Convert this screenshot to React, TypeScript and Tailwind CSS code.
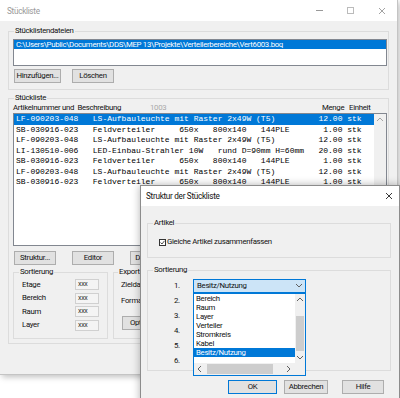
import React from 'react';

const rows: [string, string, string, string][] = [
  ['LF-090203-048', 'LS-Aufbauleuchte mit Raster 2x49W (T5)', '12.00', 'stk'],
  ['SB-030916-023', 'Feldverteiler     650x   800x140   144PLE', '1.00', 'stk'],
  ['LF-090203-048', 'LS-Aufbauleuchte mit Raster 2x49W (T5)', '12.00', 'stk'],
  ['LI-130510-006', 'LED-Einbau-Strahler 10W   rund D=90mm H=60mm', '20.00', 'stk'],
  ['SB-030916-023', 'Feldverteiler     650x   800x140   144PLE', '1.00', 'stk'],
  ['LF-090203-048', 'LS-Aufbauleuchte mit Raster 2x49W (T5)', '12.00', 'stk'],
  ['SB-030916-023', 'Feldverteiler     650x   800x140   144PLE', '1.00', 'stk'],
];

const line = (r: [string, string, string, string]) =>
  r[0].padEnd(16) + r[1].padEnd(47) + r[2].padStart(5) + ' ' + r[3];

const Btn = ({ children, w, def }: { children: React.ReactNode; w: string; def?: boolean }) => (
  <div
    className={`${w} h-[14px] flex items-center justify-center bg-[#e1e1e1] border ${
      def ? 'border-[#0078d7]' : 'border-[#adadad]'
    } leading-[10px] whitespace-nowrap overflow-hidden`}
  >
    {children}
  </div>
);

const Chevron = ({ dir, color = '#606060' }: { dir: 'up' | 'down' | 'left' | 'right'; color?: string }) => {
  const pts = {
    up: '1,5 4,2 7,5',
    down: '1,2 4,5 7,2',
    left: '5,1 2,4 5,7',
    right: '2,1 5,4 2,7',
  }[dir];
  return (
    <svg width="8" height="8" viewBox="0 0 8 8">
      <polyline points={pts} fill="none" stroke={color} strokeWidth="1" />
    </svg>
  );
};

const Xmark = ({ color }: { color: string }) => (
  <svg width="8" height="8" viewBox="0 0 8 8">
    <path d="M1 1 L7 7 M7 1 L1 7" stroke={color} strokeWidth="0.9" />
  </svg>
);

const sortFields = ['Etage', 'Bereich', 'Raum', 'Layer'];
const listItems = ['Bereich', 'Raum', 'Layer', 'Verteiler', 'Stromkreis', 'Kabel', 'Besitz/Nutzung'];

export default function App() {
  return (
    <div className="relative w-[400px] h-[398px] bg-white overflow-hidden font-['Roboto',sans-serif] text-[7.8px] tracking-[-0.3px] leading-[10px] text-[#111]">
      {/* Hauptfenster */}
      <div className="absolute left-0 top-0 w-[398px] h-[375px] bg-[#f0f0f0] border-r border-b border-[#c4c4c4] shadow-[2px_2px_6px_rgba(0,0,0,0.25)] flex flex-col">
        <div className="h-[21px] bg-white flex items-center">
          <span className="ml-[7px] text-[8.2px] text-[#999]">Stückliste</span>
          <div className="ml-auto flex h-full">
            <div className="w-[31px] flex items-center justify-center">
              <div className="w-[7px] h-[1px] bg-[#999]" />
            </div>
            <div className="w-[31px] flex items-center justify-center">
              <div className="w-[7px] h-[7px] border border-[#bbb]" />
            </div>
            <div className="w-[31px] flex items-center justify-center">
              <Xmark color="#999" />
            </div>
          </div>
        </div>

        <div className="flex flex-col px-[8px]">
          <fieldset className="mt-[5px] border border-[#dcdcdc] pb-[6px]">
            <legend className="ml-[5px] px-[1px] leading-[10px]">Stücklistendateien</legend>
            <div className="mt-[3px] ml-[4px] w-[374px] h-[27px] border border-[#828790] bg-white">
              <div className="h-[9px] bg-[#0078d7] text-white leading-[9px] pl-[2px] whitespace-nowrap">
                C:\Users\Public\Documents\DDS\MEP 13\Projekte\Verteilerbereiche\Vert6003.boq
              </div>
            </div>
            <div className="mt-[3px] ml-[5px] flex gap-[11px]">
              <Btn w="w-[47px]">Hinzufügen...</Btn>
              <Btn w="w-[42px]">Löschen</Btn>
            </div>
          </fieldset>

          <fieldset className="mt-[3px] border border-[#dcdcdc] pb-[4px]">
            <legend className="ml-[5px] px-[1px] leading-[10px]">Stückliste</legend>
            <div className="ml-[4px] h-[9px] leading-[9px] grid grid-cols-[137px_172px_27px_auto] whitespace-nowrap">
              <span>Artikelnummer und&nbsp;&nbsp;Beschreibung</span>
              <span className="text-[#aaa]">1003</span>
              <span>Menge</span>
              <span>Einheit</span>
            </div>
            <div className="mt-[1px] ml-[4px] w-[374px] h-[133px] border border-[#828790] bg-white flex">
              <div className="w-[360px] flex flex-col font-['Liberation_Mono',monospace] text-[8px] tracking-normal text-black">
                {rows.map((r, i) => (
                  <div
                    key={i}
                    className={`h-[10.5px] leading-[10.5px] pl-[2px] whitespace-pre ${
                      i === 0 ? 'bg-[#0078d7] text-white' : ''
                    }`}
                  >
                    {line(r)}
                  </div>
                ))}
              </div>
              <div className="flex-1 bg-[#f0f0f0] flex flex-col items-center">
                <div className="h-[12px] flex items-center">
                  <Chevron dir="up" color="#a3a3a3" />
                </div>
              </div>
            </div>
            <div className="mt-[5px] ml-[5px] flex gap-[16px]">
              <Btn w="w-[42px]">Struktur...</Btn>
              <Btn w="w-[42px]">Editor</Btn>
              <Btn w="w-[42px]">Drucken...</Btn>
            </div>
            <div className="mt-[2px] ml-[4px] flex gap-[5px]">
              <fieldset className="w-[95px] border border-[#dcdcdc] pb-[7px]">
                <legend className="ml-[5px] px-[1px] leading-[10px]">Sortierung</legend>
                <div className="mt-[2px] pl-[8px] flex flex-col gap-[2.5px]">
                  {sortFields.map((f) => (
                    <div key={f} className="h-[11px] flex items-center">
                      <span className="w-[53px]">{f}</span>
                      <div className="w-[24px] h-[11px] border border-[#d0d0d0] bg-[#f4f4f4] pl-[2px] text-[7px] leading-[9px] text-[#333]">
                        xxx
                      </div>
                    </div>
                  ))}
                </div>
              </fieldset>
              <fieldset className="w-[273px] border border-[#dcdcdc] pb-[8px]">
                <legend className="ml-[4px] px-[1px] leading-[10px]">Export</legend>
                <div className="mt-[2px] pl-[7px] flex flex-col">
                  <div className="h-[11px] flex items-center">Zieldatei:</div>
                  <div className="mt-[5px] h-[11px] flex items-center">Format:</div>
                  <div className="mt-[10px] ml-[1px]">
                    <Btn w="w-[50px]">Optionen...</Btn>
                  </div>
                </div>
              </fieldset>
            </div>
          </fieldset>
        </div>
      </div>

      {/* Dialog */}
      <div className="absolute left-[140px] top-[185px] w-[260px] h-[220px] bg-[#f0f0f0] border border-[#8c8c8c] shadow-[0_0_8px_rgba(0,0,0,0.3)] flex flex-col">
        <div className="h-[20px] bg-white flex items-center">
          <span className="ml-[5px] text-[8.2px]">Struktur der Stückliste</span>
          <div className="ml-auto w-[20px] h-full flex items-center justify-center">
            <Xmark color="#222" />
          </div>
        </div>

        <fieldset className="mt-[12px] ml-[6px] mr-[8px] border border-[#dcdcdc] pb-[10px]">
          <legend className="ml-[5px] px-[1px] leading-[10px]">Artikel</legend>
          <div className="mt-[9px] pl-[11px] h-[10px] flex items-center gap-[1px]">
            <div className="w-[7px] h-[7px] border border-[#333] bg-white flex items-center justify-center">
              <svg width="5" height="5" viewBox="0 0 5 5">
                <polyline points="0.5,2.5 2,4 4.5,0.8" fill="none" stroke="#222" strokeWidth="0.8" />
              </svg>
            </div>
            <span>Gleiche Artikel zusammenfassen</span>
          </div>
        </fieldset>

        <fieldset className="mt-[7px] ml-[6px] mr-[8px] border border-[#dcdcdc] pb-[2px]">
          <legend className="ml-[5px] px-[1px] leading-[10px]">Sortierung</legend>
          <div className="mt-[4px] flex flex-col gap-[1px]">
            {[1, 2, 3, 4, 5, 6].map((n) => (
              <div key={n} className="h-[14px] grid grid-cols-[45px_113px] items-center">
                <span className="pl-[26px]">{n}.</span>
                {n === 1 ? (
                  <div className="relative">
                    <div className="h-[14px] border border-[#0078d7] bg-[#cce4f7] flex items-center pl-[3px]">
                      <span>Besitz/Nutzung</span>
                      <div className="ml-auto mr-[2px] flex items-center">
                        <Chevron dir="down" />
                      </div>
                    </div>
                    <div className="absolute left-0 top-[14px] w-[113px] h-[83px] z-10 border border-[#0078d7] bg-white flex flex-col">
                      <div className="h-[69px] flex">
                        <div className="w-[101px] flex flex-col">
                          {listItems.map((it) => (
                            <div
                              key={it}
                              className={`h-[9px] leading-[9px] pl-[2px] ${
                                it === 'Besitz/Nutzung' ? 'bg-[#0078d7] text-white' : ''
                              }`}
                            >
                              {it}
                            </div>
                          ))}
                        </div>
                        <div className="flex-1 bg-[#f0f0f0] flex flex-col">
                          <div className="h-[11px] flex items-center justify-center">
                            <Chevron dir="up" />
                          </div>
                          <div className="mt-[11px] h-[35px] mx-[1px] bg-[#cdcdcd]" />
                          <div className="mt-auto h-[11px] flex items-center justify-center">
                            <Chevron dir="down" />
                          </div>
                        </div>
                      </div>
                      <div className="h-[12px] flex bg-[#f0f0f0]">
                        <div className="w-[11px] flex items-center justify-center">
                          <Chevron dir="left" />
                        </div>
                        <div className="ml-[2px] my-[1px] w-[66px] bg-[#cdcdcd]" />
                        <div className="ml-auto w-[11px] flex items-center justify-center">
                          <Chevron dir="right" />
                        </div>
                        <div className="w-[11px] bg-[#f0f0f0]" />
                      </div>
                    </div>
                  </div>
                ) : (
                  <div className="h-[14px] border border-[#adadad] bg-[#e1e1e1]" />
                )}
              </div>
            ))}
          </div>
        </fieldset>

        <div className="mt-[9px] ml-[87px] flex">
          <Btn w="w-[49px]" def>
            OK
          </Btn>
          <div className="ml-[7px]">
            <Btn w="w-[44px]">Abbrechen</Btn>
          </div>
          <div className="ml-[14px]">
            <Btn w="w-[42px]">Hilfe</Btn>
          </div>
        </div>
      </div>
    </div>
  );
}
